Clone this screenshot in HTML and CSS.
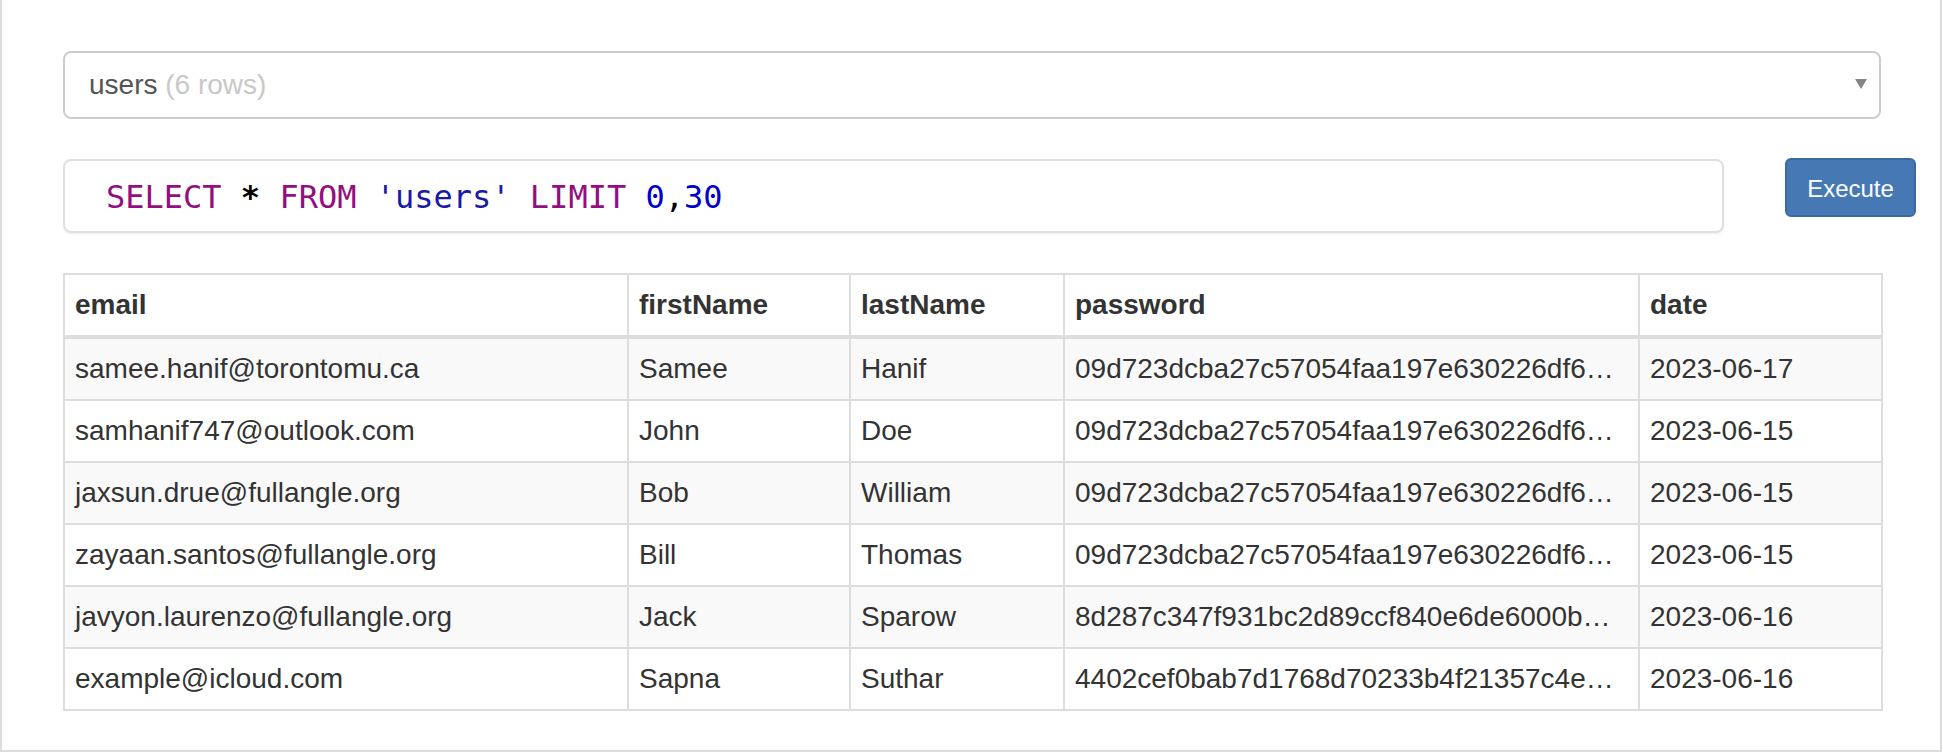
FILE: index.html
```html
<!DOCTYPE html>
<html lang="en">
<head>
<meta charset="utf-8">
<title>SQL Browser</title>
<link rel="stylesheet" href="styles.css">
</head>
<body>
<div class="panel">
  <div class="select">
    <span class="select-name">users</span> <span class="select-count">(6 rows)</span>
    <svg class="select-arrow" width="12" height="10" viewBox="0 0 12 10"><polygon points="0,0 12,0 6,10" fill="#858585"/></svg>
  </div>

  <div class="query-row">
    <div class="editor"><span class="kw">SELECT</span> <span class="star">*</span> <span class="kw">FROM</span> <span class="str">'users'</span> <span class="kw">LIMIT</span> <span class="num">0</span><span class="op">,</span><span class="num">30</span></div>
    <button class="btn" type="button">Execute</button>
  </div>

  <table class="data">
    <colgroup>
      <col class="c-email">
      <col class="c-first">
      <col class="c-last">
      <col class="c-pass">
      <col class="c-date">
    </colgroup>
    <thead>
      <tr><th>email</th><th>firstName</th><th>lastName</th><th>password</th><th>date</th></tr>
    </thead>
    <tbody>
      <tr><td>samee.hanif@torontomu.ca</td><td>Samee</td><td>Hanif</td><td class="trunc">09d723dcba27c57054faa197e630226df6…</td><td>2023-06-17</td></tr>
      <tr><td>samhanif747@outlook.com</td><td>John</td><td>Doe</td><td class="trunc">09d723dcba27c57054faa197e630226df6…</td><td>2023-06-15</td></tr>
      <tr><td>jaxsun.drue@fullangle.org</td><td>Bob</td><td>William</td><td class="trunc">09d723dcba27c57054faa197e630226df6…</td><td>2023-06-15</td></tr>
      <tr><td>zayaan.santos@fullangle.org</td><td>Bill</td><td>Thomas</td><td class="trunc">09d723dcba27c57054faa197e630226df6…</td><td>2023-06-15</td></tr>
      <tr><td>javyon.laurenzo@fullangle.org</td><td>Jack</td><td>Sparow</td><td class="trunc">8d287c347f931bc2d89ccf840e6de6000b…</td><td>2023-06-16</td></tr>
      <tr><td>example@icloud.com</td><td>Sapna</td><td>Suthar</td><td class="trunc">4402cef0bab7d1768d70233b4f21357c4e…</td><td>2023-06-16</td></tr>
    </tbody>
  </table>
</div>
</body>
</html>
```
FILE: styles.css
```css
html, body {
  margin: 0;
  padding: 0;
  background: #fff;
}

body {
  font-family: "Liberation Sans", Arial, Helvetica, sans-serif;
  font-size: 28px;
  line-height: 40px;
  color: #333;
}

.panel {
  box-sizing: border-box;
  width: 1942px;
  height: 752px;
  border: 2px solid #dddddd;
  border-top: none;
  padding: 51px 0 0 61px;
  overflow: hidden;
}

.select {
  position: relative;
  box-sizing: border-box;
  width: 1818px;
  height: 68px;
  border: 2px solid #cccccc;
  border-radius: 8px;
  padding: 12px 24px;
  background: #fff;
  color: #555;
  white-space: nowrap;
}

.select-count {
  color: #c8c8c8;
}

.select-arrow {
  position: absolute;
  right: 12px;
  top: 26px;
}

.query-row {
  display: flex;
  align-items: flex-start;
  gap: 61px;
  margin-top: 39px;
}

.editor {
  box-sizing: border-box;
  width: 1661px;
  height: 74px;
  margin-top: 1px;
  border: 2px solid #e0e0e0;
  border-radius: 8px;
  box-shadow: 0 1px 2px rgba(0, 0, 0, 0.08);
  padding: 16px 0 0 41px;
  font-family: "DejaVu Sans Mono", "Liberation Mono", monospace;
  font-size: 32px;
  line-height: 40px;
  color: #000;
  white-space: nowrap;
}

.kw { color: #930f80; }
.str { color: #1a1aa6; }
.num { color: #0000cd; }
.op { color: #000; }
.star { color: #000; font-weight: bold; }

.btn {
  box-sizing: border-box;
  width: 131px;
  height: 59px;
  padding: 2px 0 0;
  border: 2px solid #3b6aa3;
  border-radius: 6px;
  background: #4679b3;
  color: #fff;
  font-family: "Liberation Sans", Arial, Helvetica, sans-serif;
  font-size: 24px;
  line-height: 36px;
}

.data {
  width: 1818px;
  margin-top: 40px;
  border-collapse: collapse;
  table-layout: fixed;
  border: 2px solid #dddddd;
}

.c-email { width: 564px; }
.c-first { width: 222px; }
.c-last { width: 214px; }
.c-pass { width: 575px; }
.c-date { width: 243px; }

.data th,
.data td {
  padding: 10px;
  border: 2px solid #dddddd;
  text-align: left;
  vertical-align: top;
  line-height: 40px;
  white-space: nowrap;
  overflow: hidden;
}

.data th {
  font-weight: bold;
  border-bottom-width: 4px;
}

.data tbody tr:nth-child(odd) {
  background: #f9f9f9;
}

.trunc {
  text-overflow: ellipsis;
}
```
